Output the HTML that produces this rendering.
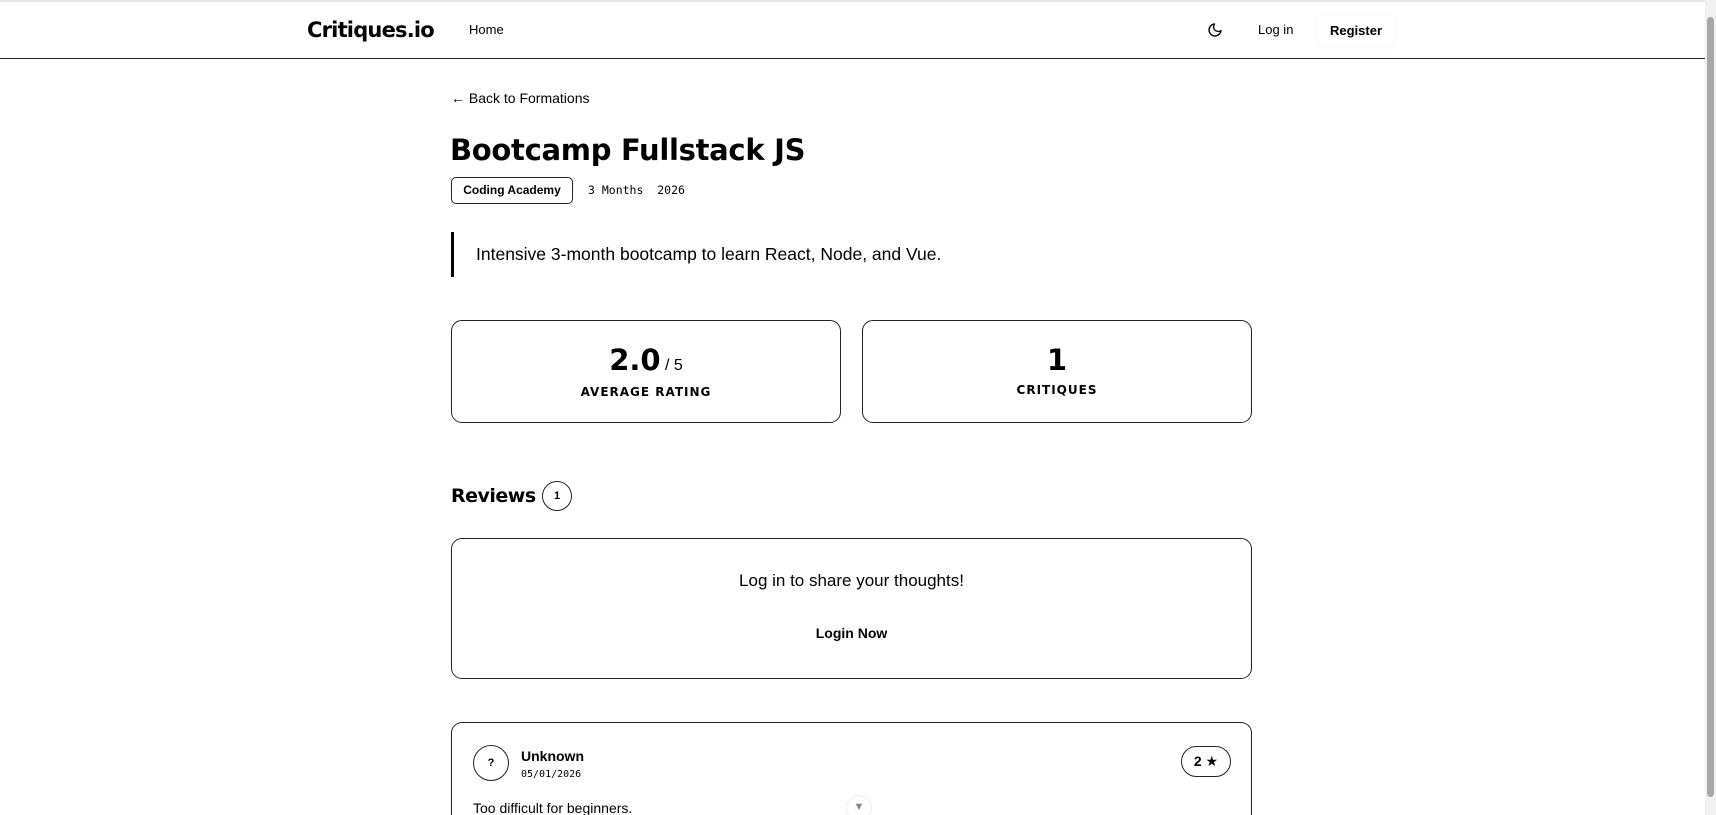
<!DOCTYPE html>
<html><head><meta charset="utf-8"><style>
*{box-sizing:border-box;margin:0;padding:0}
html,body{width:1716px;height:815px;overflow:hidden;background:#fff;color:#000;font-family:"Liberation Sans","DejaVu Sans",sans-serif}
#wrap{position:relative;width:1716px;height:815px;overflow:hidden}
.top{position:absolute;left:0;top:0;width:1705px;height:2px;background:#e6e6e6}
.nav{position:absolute;left:0;top:2px;width:1705px;height:57px;border-bottom:1.5px solid #222}
.abs{position:absolute;white-space:nowrap}
.logo{left:307px;top:16px;font:bold 21px "DejaVu Sans",sans-serif;letter-spacing:-0.8px}
.sb{position:absolute;right:0;top:0;width:11px;height:815px;background:#f1f1f1}
.sb .th{position:absolute;left:2px;top:17px;width:7px;height:780px;background:#a8a8a8;border-radius:4px}
.card{position:absolute;border:1.3px solid #222;border-radius:11px;background:#fff}
.mono{font-family:"DejaVu Sans Mono","Liberation Mono",monospace}
.lbl{font:bold 12px "DejaVu Sans",sans-serif;letter-spacing:1px;text-align:center;width:100%}
</style></head><body><div id="wrap">
<div class="top"></div>
<div class="nav">
 <div class="abs logo">Critiques.io</div>
 <div class="abs" style="left:469px;top:20px;font-size:13px">Home</div>
 <svg class="abs" style="left:1207px;top:20px" width="16" height="16" viewBox="0 0 24 24" fill="none" stroke="#111" stroke-width="2.2" stroke-linecap="round" stroke-linejoin="round"><path d="M21 12.8A9 9 0 1 1 11.2 3a7 7 0 0 0 9.8 9.8z"/></svg>
 <div class="abs" style="left:1258px;top:20px;font-size:13px">Log in</div>
 <div class="abs" style="left:1316px;top:13px;width:80px;height:32px;border-radius:8px;box-shadow:0 0 3px rgba(0,0,0,.06);font-weight:bold;font-size:13px;text-align:center;line-height:32px">Register</div>
</div>
<div class="sb"><div class="th"></div></div>

<div class="abs" style="left:451px;top:90px;font-size:14px">← Back to Formations</div>
<div class="abs" style="left:450px;top:133px;font:bold 29px 'DejaVu Sans',sans-serif;letter-spacing:-0.3px">Bootcamp Fullstack JS</div>
<div class="abs" style="left:451px;top:177px;width:122px;height:27px;border:1.3px solid #222;border-radius:5px;font-weight:bold;font-size:12px;text-align:center;line-height:25px">Coding Academy</div>
<div class="abs mono" style="left:588px;top:183px;font-size:11.5px">3 Months&nbsp;&nbsp;2026</div>
<div class="abs" style="left:451px;top:232px;width:3px;height:45px;background:#000"></div>
<div class="abs" style="left:476px;top:244px;font-size:17.5px">Intensive 3-month bootcamp to learn React, Node, and Vue.</div>

<div class="card" style="left:451px;top:320px;width:390px;height:103px">
 <div class="abs" style="left:0;width:100%;top:22px;text-align:center"><span style="font:bold 29px 'DejaVu Sans',sans-serif">2.0</span><span style="font-size:16px"> / 5</span></div>
 <div class="abs lbl" style="left:0;top:64px">AVERAGE RATING</div>
</div>
<div class="card" style="left:862px;top:320px;width:390px;height:103px">
 <div class="abs" style="left:0;width:100%;top:22px;text-align:center;font:bold 29px 'DejaVu Sans',sans-serif">1</div>
 <div class="abs lbl" style="left:0;top:62px">CRITIQUES</div>
</div>

<div class="abs" style="left:451px;top:485px;font:bold 19px 'DejaVu Sans',sans-serif;letter-spacing:-0.5px">Reviews</div>
<div class="abs" style="left:542px;top:481px;width:30px;height:30px;border:1.3px solid #222;border-radius:50%;text-align:center;line-height:28px;font-size:11px;font-weight:bold">1</div>

<div class="card" style="left:451px;top:538px;width:801px;height:141px">
 <div class="abs" style="left:0;width:100%;top:32px;text-align:center;font-size:17px">Log in to share your thoughts!</div>
 <div class="abs" style="left:0;width:100%;top:86px;text-align:center;font-size:14px;font-weight:bold">Login Now</div>
</div>

<div class="card" style="left:451px;top:722px;width:801px;height:93px;border-bottom:none;border-radius:11px 11px 0 0">
 <div class="abs" style="left:21px;top:22px;width:36px;height:36px;border:1.3px solid #222;border-radius:50%;text-align:center;line-height:34px;font-size:11px;font-weight:bold">?</div>
 <div class="abs" style="left:69px;top:25px;font-size:14px;font-weight:bold">Unknown</div>
 <div class="abs mono" style="left:69px;top:46px;font-size:10px">05/01/2026</div>
 <div class="abs" style="left:729px;top:23px;width:50px;height:31px;border:1.3px solid #222;border-radius:16px;text-align:center;line-height:29px;font-size:14px;font-weight:bold">2 ★</div>
 <div class="abs" style="left:21px;top:77px;font-size:14px;height:15px;overflow:hidden">Too difficult for beginners.</div>
</div>
<div class="abs" style="left:846px;top:795px;width:26px;height:20px;overflow:hidden"><div style="width:26px;height:26px;border-radius:50%;background:#fff;box-shadow:inset 0 0 0 1px #eee;text-align:center;line-height:24px;font-size:11px;color:#888">▼</div></div>
</div></body></html>
